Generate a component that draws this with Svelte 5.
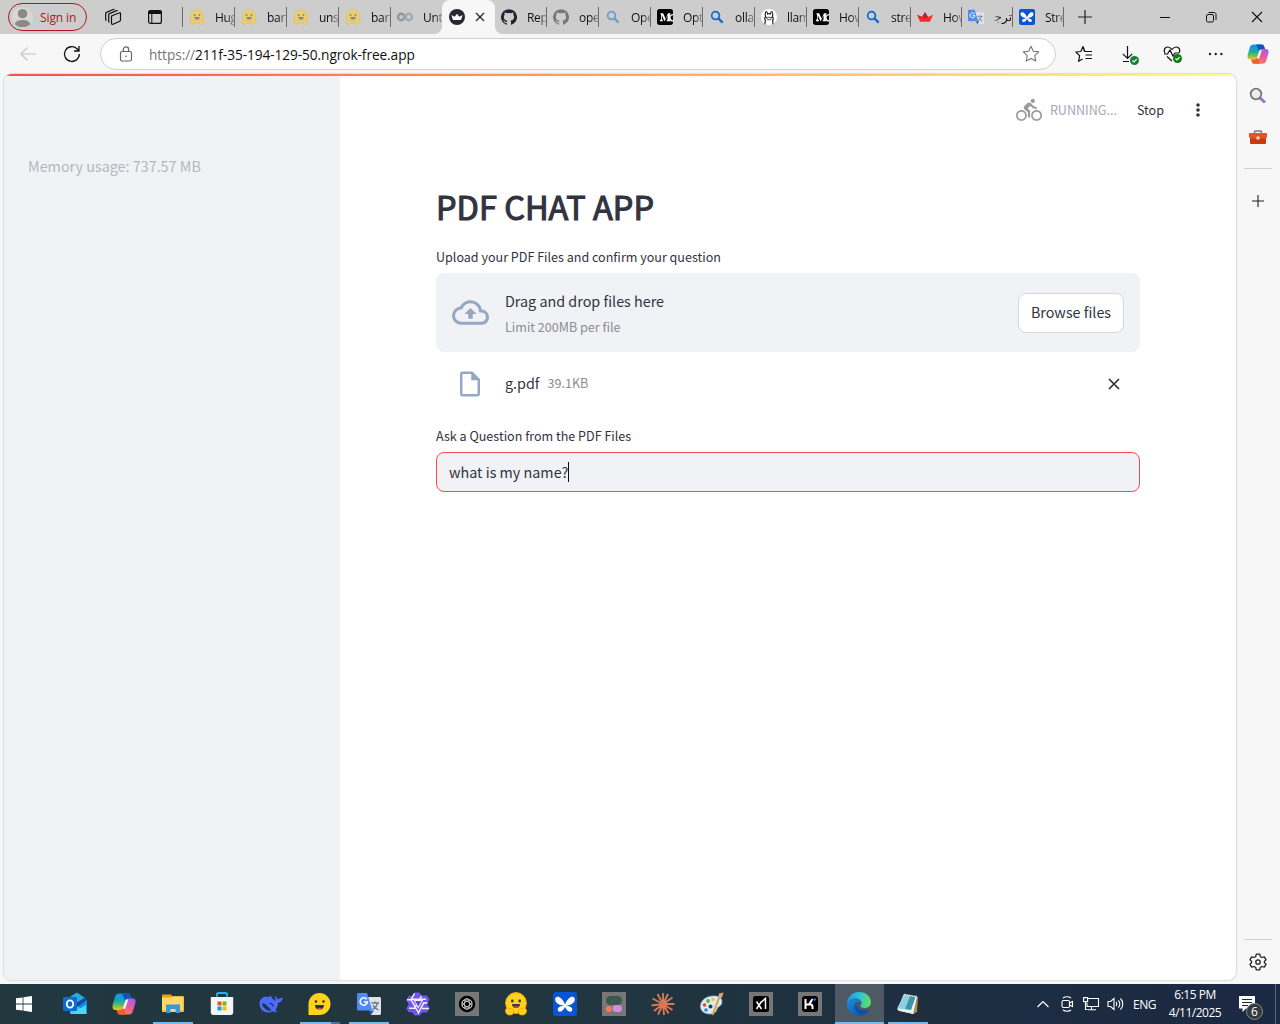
<script>
  const tabs = [
    { icon: 'hug', title: 'Hug', dim: true },
    { icon: 'hug', title: 'bart', dim: true },
    { icon: 'hug', title: 'uns', dim: true },
    { icon: 'hug', title: 'bart', dim: true },
    { icon: 'colab', title: 'Unt', dim: true, beforeActive: true },
    { icon: 'crownDark', title: '', active: true },
    { icon: 'github', title: 'Rep' },
    { icon: 'github', title: 'ope', dim: true },
    { icon: 'search', title: 'Ope', dim: true },
    { icon: 'medium', title: 'Opt' },
    { icon: 'search', title: 'olla' },
    { icon: 'ollama', title: 'llam' },
    { icon: 'medium', title: 'How' },
    { icon: 'search', title: 'stre' },
    { icon: 'crownRed', title: 'How', narrow: true },
    { icon: 'translate', title: 'ترجـ', rtl: true, narrow: true },
    { icon: 'butterfly', title: 'Stre', narrow: true }
  ];

  const apps = [
    { icon: 'outlook' },
    { icon: 'copilot' },
    { icon: 'folder', open: true },
    { icon: 'store' },
    { icon: 'whale' },
    { icon: 'smile', open: true, stacked: true },
    { icon: 'translate', open: true },
    { icon: 'qwen' },
    { icon: 'chatgpt' },
    { icon: 'hug' },
    { icon: 'butterfly' },
    { icon: 'cohere' },
    { icon: 'claude' },
    { icon: 'paint' },
    { icon: 'grok' },
    { icon: 'kimi' },
    { icon: 'edge', open: true, focused: true },
    { icon: 'notepad', open: true }
  ];

  let question = $state('what is my name?');
</script>

{#snippet icon(name)}
  <svg class="icon" viewBox="0 0 24 24" fill="none">
    {#if name === 'hug'}
      <circle cx="12" cy="11" r="10.4" fill="#ffd21e" stroke="#ffac03" stroke-width="1" />
      <path d="M1.5 19c0-3 2.500-4 4.500-2 1.500-1.500 4 .5 3.500 3.500-.3 2-2 2.500-4 2.500S1.500 21.500 1.500 19zM22.500 19c0-3-2.500-4-4.500-2-1.500-1.500-4 .5-3.500 3.500.3 2 2 2.500 4 2.500s4-1.500 4-4z" fill="#ffd21e" stroke="#ff9d0b" stroke-width=".8" />
      <circle cx="8.300" cy="9" r="1.400" fill="#3a3b45" /><circle cx="15.700" cy="9" r="1.400" fill="#3a3b45" />
      <path d="M8 12h8c0 2.500-1.700 4-4 4s-4-1.500-4-4z" fill="#3a3b45" /><path d="M10 14.800c1-1 3-1 4 0-1 1.200-3 1.200-4 0z" fill="#f04438" />
    {:else if name === 'colab'}
      <circle cx="6.300" cy="12" r="4.800" stroke="#4f6579" stroke-width="3.600" />
      <circle cx="17.700" cy="12" r="4.800" stroke="#74869a" stroke-width="3.600" />
    {:else if name === 'crownDark'}
      <circle cx="12" cy="12" r="12" fill="#262730" />
      <path d="M3.500 9l5 2.500L12 7l3.500 4.500 5-2.500-2.500 7.500H6z" fill="#fff" />
    {:else if name === 'crownRed'}
      <path d="M0 8.500l7.500 3.500L12 5l4.500 7L24 8.500 19.500 19h-15z" fill="#ff2b2b" />
      <path d="M7.500 12L12 5l4.500 7-4.500 2zM0 8.500l7.500 3.500-2 2z" fill="#a12a35" />
    {:else if name === 'github'}
      <path fill="#1f2530" d="M12 .3a12 12 0 0 0-3.800 23.400c.6.1.8-.3.8-.6v-2c-3.300.7-4-1.600-4-1.600-.6-1.400-1.400-1.800-1.400-1.800-1-.7.1-.7.1-.7 1.200 0 1.900 1.200 1.900 1.200 1 1.800 2.800 1.300 3.500 1 0-.8.400-1.300.7-1.600-2.700-.3-5.500-1.300-5.500-6 0-1.200.5-2.300 1.300-3.100-.2-.4-.6-1.600 0-3.200 0 0 1-.3 3.400 1.200a11.500 11.500 0 0 1 6 0c2.300-1.500 3.300-1.200 3.300-1.200.6 1.600.2 2.800 0 3.200.9.800 1.300 1.900 1.300 3.200 0 4.600-2.800 5.600-5.500 5.900.5.400.9 1 .9 2.200v3.300c0 .3.100.7.800.6A12 12 0 0 0 12 .3" />
    {:else if name === 'search'}
      <circle cx="9.800" cy="9.800" r="5.800" stroke="#0f6cce" stroke-width="2.600" /><path d="M14 14l6.500 6.500" stroke="#0f6cce" stroke-width="3.400" />
    {:else if name === 'medium'}
      <rect width="24" height="24" rx="4" fill="#000" />
      <path d="M5 6.500h4.200l3.700 8.300 3.500-8.300h4v1l-1.200 1v7.800l1.200 1v1h-6v-1l1.400-1V9.500L11.700 18h-.6L7.200 9.500V15l1.700 2.300v1H4.300v-1L6 15V8.500L5 7.300z" fill="#fff" />
      <path d="M24 8.500c-4 0-5 3-4.500 5.500.5 2.500 2.500 3.800 4.500 3.800" stroke="#fff" stroke-width="2" />
    {:else if name === 'ollama'}
      <circle cx="12" cy="12" r="12" fill="#fff" />
      <path d="M6.500 23c-1-2-.5-4 .2-5.200-1.500-2.300-1.200-4.800.3-6.300-1-2-.7-7.500.8-7.700 1.400 0 1.800 2.200 2 3.600 1.400-.6 3-.6 4.400 0 .2-1.400.6-3.600 2-3.600 1.500.2 1.800 5.700.8 7.700 1.500 1.500 1.800 4 .3 6.300.7 1.200 1.200 3.200.2 5.200" stroke="#222" stroke-width="1.700" />
      <ellipse cx="12" cy="14.300" rx="3" ry="2" stroke="#222" stroke-width="1.200" /><circle cx="8.300" cy="12.500" r=".9" fill="#222" /><circle cx="15.700" cy="12.500" r=".9" fill="#222" />
    {:else if name === 'translate'}
      <path d="M10 5h12.500c.9 0 1.500.6 1.500 1.500v15c0 .9-.6 1.500-1.500 1.500H14z" fill="#dfe3e8" />
      <path d="M12 18.500h5L14 23z" fill="#2a56c6" />
      <path d="M1.500 1H10l5.500 17.500h-14C.6 18.500 0 17.900 0 17V2.500C0 1.600.6 1 1.500 1z" fill="#4f8bf5" />
      <path d="M9.800 7.300A3.700 3.700 0 1 0 10.500 10H7" stroke="#fff" stroke-width="1.500" />
      <path d="M14.500 11h7.500M18 9.500V11M20.500 11c-.7 3-3 5.500-5 6.500M16 13c1 2.500 3 4 5.500 5" stroke="#687b89" stroke-width="1.300" />
    {:else if name === 'butterfly'}
      <rect width="24" height="24" rx="3" fill="#0955d4" />
      <path d="M11.300 13.800C8.500 13.300 3.300 12.500 2.300 8.300 1.600 5.500 4 4 6.500 5.200 9.500 6.700 11.300 10.500 12 12.700c.7-2.200 2.500-6 5.500-7.500 2.500-1.200 4.900.3 4.200 3.100-1 4.200-6.200 5-9 5.500 2.800.2 5.800.7 6.500 3.200.5 2-1.500 3.300-3.500 2.300-1.900-.9-3.100-2.800-3.700-4.500-.6 1.700-1.800 3.600-3.700 4.500-2 1-4-.3-3.500-2.300.7-2.500 3.700-3 6.500-3.200z" fill="#fff" />
    {:else if name === 'outlook'}
      <path d="M4 7l9-6 9.500 6v4L13 14 4 11z" fill="#1490df" /><path d="M7 5l7-4.500L23.500 7 15 12z" fill="#28a8ea" />
      <path d="M7 11l8 3 9-6v12.500c0 1-.6 1.500-1.500 1.500h-14C7.600 22 7 21.500 7 20.500z" fill="#35c6f5" /><path d="M24 8.500V20L12 13z" fill="#0f8fe0" /><path d="M7 22l16-9v7.500c0 1-.5 1.500-1.500 1.500z" fill="#4ad7fb" />
      <path d="M13 11l10-6 1 3-10 7z" fill="#114c97" /><rect x="0" y="5" width="14" height="14" rx="1.300" fill="#0f6cc9" />
      <ellipse cx="7" cy="12" rx="3.200" ry="3.600" stroke="#fff" stroke-width="1.800" />
    {:else if name === 'copilot'}
      <defs>
        <linearGradient id="cpA" x1="0" y1="0" x2="0" y2="1"><stop stop-color="#1693e8" /><stop offset=".45" stop-color="#13a9b4" /><stop offset=".75" stop-color="#78bd4c" /><stop offset="1" stop-color="#f3cc17" /></linearGradient>
        <linearGradient id="cpB" x1=".8" y1="0" x2=".2" y2="1"><stop stop-color="#a75cf1" /><stop offset=".5" stop-color="#ee5d91" /><stop offset="1" stop-color="#ff8b43" /></linearGradient>
      </defs>
      <path d="M11 1.500h5c1.700 0 2.400 1 2.800 2.500l.8 2.500h-3c-2 0-2.700 1-3.200 2.800l-1.700 5.700c-.6 2-1.700 3-3.500 3H3.500C.8 18 0 15.800.7 13L3 5c.8-2.500 2-3.500 4-3.500z" fill="url(#cpA)" />
      <path d="M10 1.500h6c1.700 0 2.400 1 2.800 2.500l.8 2.500h-3c-2 0-2.700 1-3.200 2.800z" fill="#1352ba" />
      <path d="M13 22.500H8c-1.700 0-2.400-1-2.800-2.500l-.6-2H8c1.800 0 2.900-1 3.500-3l1.900-5.700c.5-1.800 1.200-2.800 3.200-2.800h4c2.700 0 3.500 2 2.700 4.800l-2.300 7.700c-.8 2.500-2 3.500-4 3.500z" fill="url(#cpB)" />
      <path d="M14 22.500H8c-1.700 0-2.400-1-2.800-2.500l-.6-2H8c1.800 0 2.900-1 3.500-3z" fill="#f45c32" />
      <path d="M13.800 7.500h2.400l-3 9.300h-2.600z" fill="#f7f2f5" />
    {:else if name === 'folder'}
      <path d="M1 3.500c0-.6.4-1 1-1h8l1.500 2H22c.6 0 1 .4 1 1V18H1z" fill="#e5a50a" /><path d="M1 5.500h9l1.500-1.200H22.500V20H1z" fill="#ffd667" />
      <path d="M5 12.500h14V21h-4.500v-4h-5v4H5z" fill="#3a96dd" /><path d="M1 18h4v2H1zM19 18h3.500v2H19z" fill="#f8bd39" />
    {:else if name === 'store'}
      <path d="M7 6V2.500C7 1.500 7.500 1 8.500 1h7c1 0 1.500.5 1.500 1.500V6" stroke="#1db4ed" stroke-width="2" />
      <path d="M.8 5h22.400v15.500c0 1.500-1 2.500-2.500 2.500H3.300C1.800 23 .8 22 .8 20.500z" fill="#f4f4f4" /><path d="M6 5V3.500h2V5M16 5V3.500h2V5" fill="#1687c9" />
      <path d="M7.500 9.500h4v4h-4z" fill="#f25022" /><path d="M12.500 9.500h4v4h-4z" fill="#7fba00" /><path d="M7.500 14.500h4v4h-4z" fill="#00a4ef" /><path d="M12.500 14.500h4v4h-4z" fill="#ffb900" />
    {:else if name === 'whale'}
      <path d="M.5 11.500C1 6.500 4.500 4 8.500 5c1.500.3 2.500-.8 3.500-1.200.3 2 2.500 4 4.500 5.500.2-2-.5-3.500-1.200-5 2 .5 2.800 2 3.500 3 1.500-.3 3-1.800 5.200-1.500-.6 3-2.200 4.500-5 5-.2 3.500-1.300 5.500-2.800 7l2 1.700c-1.500.8-3 .5-4.500-.3C7.500 22.500.5 19 .5 11.500z" fill="#4d6bfe" />
      <path d="M3 11.500c2.500-1.500 6.500 3.500 9.500 7-3 1-8.500-1.500-9.500-7z" fill="#22363f" /><path d="M10.500 11.500c1.500-.5 3.500 1 3.800 3" stroke="#22363f" stroke-width="1.200" />
    {:else if name === 'smile'}
      <path d="M.5 23V12a11 11 0 1 1 11 11z" fill="#ffd21e" /><circle cx="8" cy="9.500" r="1.300" fill="#30323b" /><circle cx="15.500" cy="9.500" r="1.300" fill="#30323b" /><path d="M7 13h9c0 3-1.800 4.500-4.500 4.500S7 16 7 13z" fill="#30323b" /><path d="M9.500 16.500c1-1 3-1 4 0-1 1-3 1-4 0z" fill="#f15a48" />
    {:else if name === 'qwen'}
      <path d="M8 .5h5.500l2 3H21l2.500 4.200-2.500 4 2.700 4.500-2.700 4.300h-5l-2.300 3H8.500l-2.300-3.200H2.700L.3 16.500l2.400-4.300L.3 8 2.800 3.700h3.500z" fill="#6f55ec" />
      <path d="M8.500 1.500l-3.200 5.700H20M1 7.700h4L12 20M3 16.300h5.500L15.500 4M21.500 11l-3.700-.2-6 11.200M16 16.500H23M8.500 8.500h7.500L12.200 15.200z" stroke="#f4f0ff" stroke-width="1.500" />
      <path d="M9 9h6.500l-3.300 5.500z" fill="#6045de" />
    {:else if name === 'chatgpt'}
      <rect width="24" height="24" fill="#777" /><circle cx="12" cy="12" r="8.200" fill="#000" />
      <g stroke="#e4e4e4" stroke-width=".75"><ellipse cx="12" cy="12" rx="2.500" ry="5.300" /><ellipse cx="12" cy="12" rx="2.500" ry="5.300" transform="rotate(60 12 12)" /><ellipse cx="12" cy="12" rx="2.500" ry="5.300" transform="rotate(120 12 12)" /><circle cx="12" cy="12" r="5.200" /></g>
    {:else if name === 'cohere'}
      <rect width="24" height="24" fill="#777" /><rect x="4" y="4" width="16" height="9" rx="4.500" fill="#39594d" /><circle cx="6.800" cy="17" r="3" fill="#ff7759" /><rect x="10.500" y="13" width="9.500" height="7" rx="3.500" fill="#d18ee2" />
    {:else if name === 'claude'}
      <path d="M12 12V1M12 12l5-10M12 12l9.500-6.500M12 12h11.500M12 12l9.500 6M12 12l5.500 9.500M12 12l1 11M12 12L7 22.500M12 12l-9 7M12 12L.5 13.500M12 12L1.500 6.500M12 12L6.500 2" stroke="#d97757" stroke-width="1.900" />
    {:else if name === 'paint'}
      <path d="M.5 14C1 7 8 3.500 15 4c6 .5 8 4 6.500 8-1 2.500-4 2.500-4.500 5-.6 3-3 5-7 5C4.500 22 .3 19 .5 14z" fill="#d7ecf8" stroke="#8fb9d2" stroke-width=".7" />
      <circle cx="4.500" cy="13" r="1.800" fill="#e94034" /><circle cx="8" cy="9" r="1.900" fill="#60b32c" /><circle cx="13" cy="7.500" r="1.700" fill="#f4c724" /><circle cx="6" cy="18" r="1.800" fill="#2d86d8" /><circle cx="10.500" cy="14.500" r="2" fill="#26404c" />
      <path d="M12.500 23L19 6" stroke="#e79a3b" stroke-width="2" /><path d="M18 6l1-4.500 4.500-1L22 5l-2 2.500z" fill="#d7a877" />
    {:else if name === 'grok'}
      <rect width="24" height="24" fill="#777" /><rect x="4" y="4" width="16" height="16" rx="2.500" fill="#000" /><path d="M7.500 9.500l5 7.500M12.500 9.500l-5 7.500M12.500 10l4-3.500V17" stroke="#fff" stroke-width="1.500" />
    {:else if name === 'kimi'}
      <rect width="24" height="24" fill="#777" /><rect x="4" y="4" width="16" height="16" rx="3" fill="#000" /><path d="M7.500 7v10M8 12.500h3L14.500 7M11 12.300c2.500 0 3.500.7 3.500 2.200V17" stroke="#fff" stroke-width="2" /><circle cx="16.700" cy="7.500" r="1.200" fill="#1783ff" />
    {:else if name === 'edge'}
      <defs>
        <linearGradient id="edA" x1="0" y1=".4" x2="1" y2=".5"><stop stop-color="#1b9de2" /><stop offset=".5" stop-color="#2ec3da" /><stop offset="1" stop-color="#63e051" /></linearGradient>
        <linearGradient id="edB" x1="0" y1="0" x2="1" y2="1"><stop stop-color="#1b8fdc" /><stop offset="1" stop-color="#0c4ba0" /></linearGradient>
      </defs>
      <path d="M0 11.500C.5 4.500 5.500 0 12 0c7.500 0 12 5 12 10 0 3.800-3 6-6 6-2.500 0-4.500-.8-4.500-2 0-.7 1-1 1-3 0-2.500-2.500-4.500-6-4.500-4 0-7 2.500-8.500 5z" fill="url(#edA)" />
      <path d="M0 12c0-3.500 3.500-5.500 7.500-5.500 4 0 6.500 2 7 4.500-.5-1-1.500-1.500-2.500-1.500-2 0-4 2-4 5 0 4 3 7 7 7 2.500 0 4-.5 6-1.500C19 22.500 15.500 24 12 24 5.500 24 0 19 0 12z" fill="url(#edB)" />
      <path d="M9.500 10.500C8 12 7 14.500 8 17.500c1 3.500 4.500 5 8 4.500 3-.4 5.200-2 6.500-4.200.2-.5-.2-.7-.7-.4-4 2-11 1-12.300-3.900z" fill="#104fa5" />
    {:else if name === 'notepad'}
      <path d="M8 2l14 3-1 15-4 2z" fill="#b08a4e" /><path d="M7.500 2.500L21 4.500 17 22l-15.500-4z" fill="#f4f7f8" /><path d="M8 3l11.500 2-4.500 13L1 16.500z" fill="#8fd0dd" /><path d="M14 4l5.500 1-4.500 13-6-.7z" fill="#4094aa" /><path d="M8 2.500l13 2" stroke="#d3e3e7" stroke-width="1.500" stroke-dasharray="1.500 1" />
      <path d="M1 16.500L15 18l3 4-15-3z" fill="#e7eff1" />
    {/if}
  </svg>
{/snippet}

<div class="desktop">
  <div class="tabstrip">
    <div class="profile">
      <svg class="avatar" viewBox="0 0 22 22"><circle cx="11" cy="11" r="11" fill="#d9d7d4" /><circle cx="11" cy="7" r="5" fill="#8b8988" /><path d="M3 18c0-6 16-6 16 0-4 4-12 4-16 0z" fill="#8b8988" /></svg>
      <span>Sign in</span>
    </div>
    <svg class="strip-icon workspaces" viewBox="0 0 18 18" fill="none" stroke="#111" stroke-width="1.200" stroke-linejoin="round"><path d="M7.500 8l8-3.200c.7-.2 1 .1 1 .7v6.500c0 .7-.3 1-.8 1.200l-6.700 3c-.8.300-1.500 0-1.500-.7zM5.300 14.500c-.4-.2-.6-.5-.6-1V6.800c0-.6.3-1 .8-1.200l7-3c.5-.2.9-.1 1.200.2M2.500 12.500c-.5-.2-.8-.5-.8-1V5.600c0-.6.3-1 .8-1.200l6.800-2.900c.5-.2.9-.1 1.200.2" /></svg>
    <svg class="strip-icon vertical" viewBox="0 0 16 16" fill="none"><rect x="1.600" y="1.600" width="12.800" height="12.800" rx="2" stroke="#111" stroke-width="1.200" /><path d="M1.500 2.500c0-1 .5-1 1-1h11c.7 0 1 .3 1 1V5h-13z" fill="#111" /><path d="M4.800 5v9" stroke="#111" /></svg>
    <div class="tabs">
      {#each tabs as tab}
        <div class="tab" class:active={tab.active} class:plain={tab.beforeActive} class:dim={tab.dim} class:narrow={tab.narrow}>
          <span class="favicon">{@render icon(tab.icon)}</span>
          {#if tab.active}
            <svg class="close-tab" viewBox="0 0 10 10"><path d="M1 1l8 8M9 1L1 9" stroke="#222" stroke-width="1.200" /></svg>
          {:else}
            <span class="title" class:rtl={tab.rtl} dir={tab.rtl ? 'rtl' : 'ltr'}>{tab.title}</span>
          {/if}
        </div>
      {/each}
    </div>
    <svg class="new-tab" viewBox="0 0 14 14"><path d="M7 0v14M0 7h14" stroke="#222" stroke-width="1.200" /></svg>
    <div class="window-buttons">
      <svg viewBox="0 0 12 12"><path d="M1 6.500h10" stroke="#111" /></svg>
      <svg viewBox="0 0 12 12" fill="none" stroke="#111"><rect x="1.500" y="3.500" width="7" height="7.500" rx="1.500" /><path d="M3.500 1.500H9c1.200 0 2 .8 2 2V9" /></svg>
      <svg viewBox="0 0 12 12"><path d="M1 1l10 10M11 1L1 11" stroke="#111" stroke-width="1.100" /></svg>
    </div>
  </div>

  <div class="toolbar">
    <svg class="back" viewBox="0 0 18 16" fill="none" stroke="#c4c4c4" stroke-width="1.200"><path d="M17 8H2M8.500 1.500L2 8l6.500 6.500" /></svg>
    <svg class="reload" viewBox="0 0 18 18" fill="none" stroke="#111" stroke-width="1.300"><path d="M16.300 9A7.400 7.400 0 1 1 14 3.700L15.800 5.500M16 1v5h-5" /></svg>
    <div class="address">
      <svg class="lock" viewBox="0 0 14 16" fill="none" stroke="#666" stroke-width="1.200"><rect x="1.500" y="5.500" width="11" height="9.500" rx="1.800" /><path d="M4.300 5.500V3.600a2.700 2.700 0 0 1 5.400 0v1.900" /><circle cx="7" cy="10.300" r=".8" fill="#555" stroke="none" /></svg>
      <span class="url"><span class="scheme">https://</span>211f-35-194-129-50.ngrok-free.app</span>
      <svg class="star" viewBox="0 0 18 18" fill="none" stroke="#777" stroke-width="1.100" stroke-linejoin="round"><path d="M9 1.300l2.300 5 5.400.6-4 3.700 1.100 5.500L9 13.400l-4.800 2.700 1.100-5.500-4-3.700 5.400-.6z" /></svg>
    </div>
    <div class="tools">
      <svg viewBox="0 0 18 18" fill="none" stroke="#111" stroke-width="1.200" stroke-linejoin="round"><path d="M9.500 6.500L8 1.500l-2.200 5L.8 7l3.800 3.600-1 5.700L7.500 14M8 1.500l1.900 5H17M10.500 10H17M10.500 13.500H17" /></svg>
      <svg viewBox="0 0 18 18" fill="none"><path d="M8.500 1v12.500M3.800 8.800l4.700 4.700 4.700-4.700M4 16.500h6" stroke="#111" stroke-width="1.200" /><circle cx="15.500" cy="15.500" r="4.500" fill="#168038" /><path d="M13.500 15.500l1.500 1.500 2.700-2.800" stroke="#fff" stroke-width="1.200" /></svg>
      <svg viewBox="0 0 18 18" fill="none"><path d="M2 8C0 5 2 2 4.700 2 7 2 8 3.200 9 4.500 10 3.200 11 2 13.300 2 16 2 18 5 16 8M1 9h3.500L7 5l3 6 2-3h4M4 11.500l5 4.500" stroke="#111" stroke-width="1.200" /><circle cx="14.500" cy="13.500" r="4.500" fill="#107c10" /><path d="M12.500 13.500l1.500 1.500 2.700-2.800" stroke="#fff" stroke-width="1.200" /></svg>
      <svg viewBox="0 0 18 18" fill="#222"><circle cx="3" cy="9" r="1.200" /><circle cx="8.700" cy="9" r="1.200" /><circle cx="14.400" cy="9" r="1.200" /></svg>
    </div>
    <span class="copilot">{@render icon('copilot')}</span>
  </div>

  <div class="body">
    <div class="page">
      <div class="decoration"></div>
      <div class="app">
        <aside><p>Memory usage: 737.57 MB</p></aside>
        <main>
          <header>
            <svg class="bike" viewBox="0 0 24 24" fill="#9b9b9b"><path d="M15.500 5.500c1.100 0 2-.9 2-2s-.9-2-2-2-2 .9-2 2 .9 2 2 2zM5 12c-2.800 0-5 2.200-5 5s2.200 5 5 5 5-2.200 5-5-2.200-5-5-5zm0 8.500c-1.900 0-3.500-1.600-3.500-3.500s1.600-3.500 3.500-3.500 3.500 1.600 3.500 3.500-1.600 3.500-3.500 3.500zm5.800-10l2.400-2.400.8.800c1.300 1.300 3 2.100 5.100 2.100V9c-1.500 0-2.700-.6-3.600-1.500l-1.900-1.900c-.5-.4-1-.6-1.600-.6s-1.100.2-1.400.6L7.800 8.400c-.4.4-.6.9-.6 1.400 0 .6.2 1.100.6 1.400L11 14v5h2v-6.200l-2.200-2.300zM19 12c-2.800 0-5 2.200-5 5s2.200 5 5 5 5-2.200 5-5-2.200-5-5-5zm0 8.500c-1.900 0-3.500-1.600-3.500-3.500s1.600-3.500 3.500-3.500 3.500 1.600 3.500 3.500-1.600 3.500-3.500 3.500z" /></svg>
            <span class="status">RUNNING...</span>
            <span class="stop">Stop</span>
            <svg class="kebab" viewBox="0 0 4 14" fill="#31333f"><circle cx="2" cy="2" r="1.800" /><circle cx="2" cy="7" r="1.800" /><circle cx="2" cy="12" r="1.800" /></svg>
          </header>
          <div class="content">
            <h1>PDF CHAT APP</h1>
            <div class="label upload-label">Upload your PDF Files and confirm your question</div>
            <section class="dropzone">
              <svg class="cloud" viewBox="0 0 24 24" fill="#97a6c3"><path d="M19.350 10.040A7.490 7.490 0 0 0 12 4C9.110 4 6.600 5.640 5.350 8.040A5.994 5.994 0 0 0 0 14c0 3.310 2.690 6 6 6h13c2.760 0 5-2.240 5-5 0-2.640-2.050-4.780-4.650-4.960zM19 18H6c-2.210 0-4-1.790-4-4 0-2.050 1.530-3.760 3.560-3.970l1.070-.11.5-.95A5.469 5.469 0 0 1 12 6c2.620 0 4.880 1.860 5.390 4.430l.3 1.500 1.530.11A2.980 2.980 0 0 1 22 15c0 1.650-1.350 3-3 3zM8 13h2.550v3h2.900v-3H16l-4-4-4 4z" /></svg>
              <div class="hint">
                <div class="hint-main">Drag and drop files here</div>
                <div class="small">Limit 200MB per file</div>
              </div>
              <button class="browse">Browse files</button>
            </section>
            <div class="file">
              <svg class="doc" viewBox="0 0 24 24" fill="#97a6c3"><path d="M14 2H6c-1.100 0-1.990.9-1.990 2L4 20c0 1.100.89 2 1.990 2H18c1.100 0 2-.9 2-2V8l-6-6zM6 20V4h7v5h5v11H6z" /></svg>
              <span class="filename">g.pdf</span>
              <span class="small">39.1KB</span>
              <svg class="remove" viewBox="0 0 12 12"><path d="M1 1l10 10M11 1L1 11" stroke="#31333f" stroke-width="1.700" /></svg>
            </div>
            <div class="label question-label">Ask a Question from the PDF Files</div>
            <div class="field"><span>{question}</span><i class="caret"></i></div>
          </div>
        </main>
      </div>
    </div>

    <div class="sidebar">
      <svg class="side-search" viewBox="0 0 18 18" fill="none"><path d="M10.500 10.500l5.500 5" stroke="#a16fd8" stroke-width="3" /><circle cx="7" cy="7" r="5.300" fill="#e6eff5" stroke="#777" stroke-width="1.800" /></svg>
      <svg class="side-box" viewBox="0 0 18 14" fill="none"><path d="M5.500 4V2c0-.7.3-1 1-1h5c.7 0 1 .3 1 1v2" stroke="#777" stroke-width="1.400" /><rect x="1" y="7" width="16" height="7" rx="1" fill="#c93a0d" /><path d="M1 3h16c.6 0 1 .4 1 1v2.500c0 1-1 2-2 2H2c-1 0-2-1-2-2V4c0-.6.4-1 1-1z" fill="#e8551c" /><circle cx="9" cy="8" r="1.800" fill="#dedede" /></svg>
      <hr />
      <svg class="side-add" viewBox="0 0 12 12"><path d="M6 0v12M0 6h12" stroke="#222" stroke-width="1.100" /></svg>
      <span class="spacer"></span>
      <hr />
      <svg class="gear" viewBox="0 0 18 18" fill="none" stroke="#222" stroke-width="1.300" stroke-linejoin="round"><path d="M7.300 1.200h3.400l.6 2.300 1.700 1 2.300-.7L17 6.700l-1.600 1.700v1.200L17 11.300l-1.700 2.900-2.300-.7-1.700 1-.6 2.300H7.300l-.6-2.300-1.700-1-2.300.7L1 11.300l1.600-1.700V8.400L1 6.700l1.700-2.900 2.300.7 1.700-1z" /><circle cx="9" cy="9" r="2.200" /></svg>
    </div>
  </div>

  <div class="taskbar">
    <div class="start"><svg viewBox="0 0 16 16" fill="#fff"><path d="M0 2.300L6.600 1.400v6.100H0zM7.400 1.300L16 0v7.500H7.400zM0 8.400h6.600v6.200L0 13.700zM7.400 8.400H16V16l-8.600-1.300z" /></svg></div>
    <div class="apps">
      {#each apps as app}
        <div class="task" class:open={app.open} class:stacked={app.stacked} class:focused={app.focused}>{@render icon(app.icon)}</div>
      {/each}
    </div>
    <div class="tray">
      <svg class="chevron" viewBox="0 0 12 8" fill="none" stroke="#fff" stroke-width="1.200"><path d="M.5 7L6 1.500 11.500 7" /></svg>
      <svg class="meet" viewBox="0 0 12 16" fill="none" stroke="#fff" stroke-width="1.100"><rect x="1" y="4.500" width="7.500" height="7" rx="1.500" /><path d="M8.500 7l3-1.500v5L8.500 9M2 2c2-1.600 6-1.600 8 0M2 14c2 1.600 6 1.600 8 0" /></svg>
      <svg class="net" viewBox="0 0 16 14" fill="none" stroke="#fff" stroke-width="1.100"><path d="M5 1.500h10.500v8H4V6M8.500 9.500v3M5 12.700h8M2.500 5v7.500h2" /><path d="M.6.6h4v4h-4z" /></svg>
      <svg class="vol" viewBox="0 0 17 14" fill="none" stroke="#fff" stroke-width="1.100"><path d="M1 4.500h2.500L7 1.500v11L3.500 9.500H1zM9 5c1 1 1 3 0 4M11.300 3.300c2 2 2 5.400 0 7.400M13.500 1.500c3 3 3 8 0 11" /></svg>
      <span class="lang">ENG</span>
      <div class="clock"><span>6:15 PM</span><span>4/11/2025</span></div>
      <div class="notify">
        <svg viewBox="0 0 16 16"><path d="M0 0h16v12.500H7L3.500 16v-3.500H0z" fill="#fff" /><path d="M3 3.500h10M3 6.500h10M3 9.500h6" stroke="#1b2b42" /></svg>
        <span class="badge">6</span>
      </div>
      <span class="peek"></span>
    </div>
  </div>
</div>

<style>
  :global(body) { margin: 0; overflow: hidden; }
  svg { display: block; flex: none; overflow: visible; }
  .desktop {
    width: 1280px; height: 1024px; display: flex; flex-direction: column; overflow: hidden;
    background: #f7f7f7; color: #111;
    font-family: 'Open Sans', 'Noto Sans', 'DejaVu Sans', sans-serif; font-size: 12px;
  }
  .icon { width: 100%; height: 100%; }

  .tabstrip { height: 34px; flex: none; display: flex; align-items: center; background: #cdcdcd; box-sizing: border-box; padding-left: 8px; }
  .profile { width: 79px; height: 28px; box-sizing: border-box; border: 1px solid #b01722; border-radius: 14px; display: flex; align-items: center; gap: 7px; padding-left: 3px; color: #b01722; font-size: 12px; letter-spacing: -0.1px; white-space: nowrap; }
  .avatar { width: 21px; height: 21px; }
  .workspaces { width: 18px; height: 18px; margin-left: 17px; }
  .vertical { width: 16px; height: 16px; margin-left: 25px; }
  .tabs { width: 881px; height: 34px; margin-left: 19px; padding-left: 1px; display: flex; flex: none; background: linear-gradient(#6b6b6b, #6b6b6b) left center / 1px 20px no-repeat; }
  .tab { width: 52px; flex: none; box-sizing: border-box; padding-left: 6px; display: flex; align-items: center; position: relative; background: linear-gradient(#6b6b6b, #6b6b6b) right center / 1px 20px no-repeat; }
  .tab.narrow { width: 51px; }
  .tab.narrow .title { width: 18px; }
  .tab.plain { background: none; }
  .tab.active { background: #f7f7f7; border-radius: 8px 8px 0 0; width: 53px; margin-left: -1px; padding-left: 7px; }
  .tab.active::before, .tab.active::after { content: ''; position: absolute; bottom: 0; width: 7px; height: 7px; }
  .tab.active::before { left: -7px; background: radial-gradient(circle at 0 0, transparent 6.500px, #f7f7f7 7px); }
  .tab.active::after { right: -7px; background: radial-gradient(circle at 100% 0, transparent 6.500px, #f7f7f7 7px); }
  .favicon { width: 16px; height: 16px; flex: none; }
  .dim .favicon { opacity: .5; }
  .title { width: 19px; margin-left: 10px; overflow: hidden; white-space: nowrap; letter-spacing: -0.300px; mask-image: linear-gradient(90deg, #000 60%, rgba(0, 0, 0, .3)); }
  .title.rtl { font-family: 'DejaVu Sans', sans-serif; letter-spacing: 0; mask-image: linear-gradient(270deg, #000 60%, rgba(0, 0, 0, .3)); }
  .close-tab { width: 10px; height: 10px; margin-left: 9.500px; }
  .new-tab { width: 14px; height: 14px; margin-left: 14px; }
  .window-buttons { margin-left: auto; display: flex; gap: 34px; padding-right: 17px; }
  .window-buttons svg { width: 12px; height: 12px; }

  .toolbar { height: 40px; flex: none; display: flex; align-items: center; }
  .back { width: 18px; height: 16px; margin-left: 19px; }
  .reload { width: 18px; height: 18px; margin-left: 26px; }
  .address { width: 956px; height: 32px; box-sizing: border-box; margin-left: 19px; border: 1px solid #cfcfcf; border-radius: 16px; background: #fff; display: flex; align-items: center; padding: 0 15px 0 18px; }
  .lock { width: 14px; height: 16px; }
  .url { margin-left: 16px; font-size: 13.700px; letter-spacing: -0.080px; color: #111; white-space: nowrap; }
  .scheme { color: #767676; }
  .star { width: 18px; height: 18px; margin-left: auto; }
  .tools { display: flex; margin-left: 19px; gap: 26px; }
  .tools svg { width: 18px; height: 18px; }
  .copilot { width: 22px; height: 22px; margin-left: 22px; }

  .body { height: 910px; flex: none; display: flex; }
  .page { width: 1232px; height: 906px; margin-left: 4px; border-radius: 8px; overflow: hidden; background: #fff; box-shadow: 0 0 2px rgba(0, 0, 0, .35); display: flex; flex-direction: column; }
  .decoration { height: 2px; flex: none; background: linear-gradient(90deg, #ff4b4b, #fffd80); }
  .app { flex: 1; display: flex; font-family: 'Noto Sans CJK SC', sans-serif; font-size: 14.350px; line-height: 20px; color: #31333f; }
  aside { width: 336px; background: #f0f2f6; box-sizing: border-box; padding: 80px 24px; color: #b5b7bd; }
  p { margin: 0; }
  main { flex: 1; }
  header { height: 68px; display: flex; align-items: center; justify-content: flex-end; padding-right: 36px; font-size: 12.550px; }
  .bike { width: 26px; height: 26px; margin-right: 8px; }
  .status { color: #a3a8b4; margin-right: 20px; }
  .stop { margin-right: 32px; }
  .kebab { width: 4px; height: 14px; }
  .content { padding: 42px 96px 0; }
  h1 { margin: 0; font-size: 32.500px; line-height: 40px; font-weight: 400; -webkit-text-stroke: 1.100px #31333f; white-space: nowrap; }
  .label { font-size: 12.550px; line-height: 20px; }
  .upload-label { margin-top: 21px; }
  .dropzone { height: 79px; margin-top: 6px; box-sizing: border-box; padding: 0 16px; border-radius: 8px; background: #f0f2f6; display: flex; align-items: center; }
  .cloud { width: 37px; height: 37px; margin-right: 16px; }
  .hint { display: flex; flex-direction: column; gap: 6px; padding-top: 2px; }
  .small { font-size: 12.550px; color: #8b8d94; }
  .browse { margin-left: auto; width: 106px; height: 40px; padding: 0 0 2px; border: 1px solid #d6d7db; border-radius: 8px; background: #fff; color: inherit; font: inherit; white-space: nowrap; }
  .file { height: 40px; margin-top: 12px; padding: 0 20px 0 19px; display: flex; align-items: center; }
  .doc { width: 30px; height: 30px; margin-right: 20px; }
  .file span { padding-bottom: 2px; }
  .filename { margin-right: 8px; }
  .remove { width: 12px; height: 12px; margin-left: auto; }
  .question-label { margin-top: 22px; }
  .field { height: 40px; margin-top: 6px; box-sizing: border-box; border: 1px solid #ff4b4b; border-radius: 8px; background: #f0f2f6; padding: 0 12px; display: flex; align-items: center; }
  .caret { width: 1px; height: 20px; background: #111; }

  .sidebar { width: 44px; display: flex; flex-direction: column; align-items: center; box-sizing: border-box; padding-top: 13px; }
  .side-search { width: 18px; height: 18px; }
  .side-box { width: 18px; height: 14px; margin-top: 25px; }
  hr { width: 28px; height: 1px; margin: 0; border: 0; background: #cfcfcf; flex: none; }
  .side-box + hr { margin-top: 24px; }
  .side-add { width: 12px; height: 12px; margin-top: 26px; }
  .spacer { flex: 1; }
  .gear { width: 18px; height: 18px; margin: 13px 0 13px; }

  .taskbar { height: 40px; flex: none; display: flex; background: linear-gradient(90deg, #22383f, #20353f 50%, #1c2b42 85%, #1b2942); color: #fff; }
  .start { width: 50.500px; display: flex; align-items: center; padding-left: 16px; box-sizing: border-box; }
  .start svg { width: 16px; height: 16px; }
  .apps { display: flex; }
  .task { width: 49px; box-sizing: border-box; padding: 8px 12.500px; }
  .task.open { background: linear-gradient(#76b9ed, #76b9ed) center bottom / 40px 2px no-repeat; }
  .task.stacked { background-image: linear-gradient(90deg, #76b9ed 31px, #44769c 31px); }
  .task.focused { background-size: 100% 2px; background-color: #4d5a66; }
  .tray { margin-left: auto; display: flex; align-items: center; font-size: 12px; }
  .chevron { width: 12px; height: 8px; margin-right: 12px; }
  .meet { width: 12px; height: 16px; margin-right: 10px; }
  .net { width: 16px; height: 14px; margin-right: 8px; }
  .vol { width: 17px; height: 14px; margin-right: 9px; }
  .lang { width: 24px; letter-spacing: -0.500px; }
  .clock { width: 54px; margin-left: 11px; display: flex; flex-direction: column; align-items: center; line-height: 18px; letter-spacing: -0.500px; white-space: nowrap; }
  .notify { position: relative; width: 16px; height: 16px; margin-left: 17px; }
  .notify svg { width: 16px; height: 16px; }
  .badge { position: absolute; left: 7px; top: 7px; width: 15px; height: 15px; border: 1px solid #858b91; border-radius: 50%; background: #34393e; font-size: 12px; line-height: 15px; text-align: center; }
  .peek { width: 1px; height: 40px; margin-left: 20px; margin-right: 4px; background: #5a6675; }
</style>
